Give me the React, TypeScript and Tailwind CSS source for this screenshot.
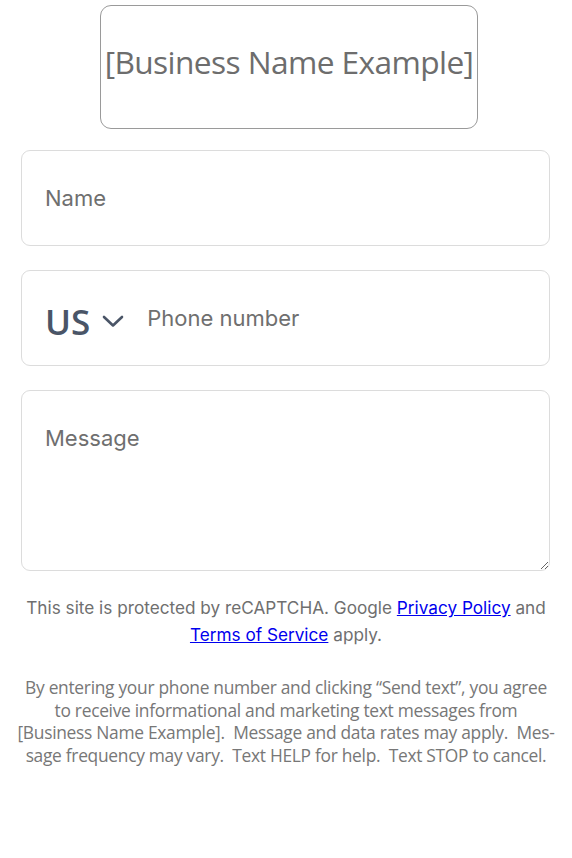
import React from "react";

const myriad = "font-['Open_Sans','Liberation_Sans',sans-serif]";
const inter = "font-['Inter','Liberation_Sans',sans-serif]";

function ChevronDown() {
  return (
    <svg width="24" height="14" viewBox="0 0 24 14" fill="none" className="text-[#4a5567]">
      <path d="M3 3l9 8.5L21 3" stroke="currentColor" strokeWidth="2.6" strokeLinecap="round" strokeLinejoin="round" />
    </svg>
  );
}

export default function App() {
  return (
    <div className="min-h-[858px] w-[572px] bg-white pt-[5px]">
      <div className="ml-[100px] flex h-[124px] w-[378px] items-center justify-center rounded-[11px] border border-[#9a9a9a] pb-[10px]">
        <span className={`${myriad} text-[31.7px] tracking-[-0.6px] text-[#6d6d6d]`}>[Business Name Example]</span>
      </div>

      <div className="ml-[21px] mt-[21px] flex w-[529px] flex-col gap-[24px]">
        <input
          placeholder="Name"
          className={`${inter} h-[96px] w-full rounded-[9px] border-[1.5px] border-[#dcdcdc] px-[23px] text-[22px] text-[#333] outline-none placeholder:text-[#6f6f6f]`}
        />

        <div className="flex h-[96px] w-full items-center rounded-[9px] border-[1.5px] border-[#dcdcdc] px-[23px]">
          <div className="flex items-center gap-[11px] pt-[6px]">
            <span className={`${myriad} text-[35px] font-semibold leading-none text-[#4a5567]`}>US</span>
            <ChevronDown />
          </div>
          <input
            placeholder="Phone number"
            className={`${inter} ml-[22px] flex-1 bg-transparent text-[22px] text-[#333] outline-none placeholder:text-[#6f6f6f]`}
          />
        </div>

        <textarea
          placeholder="Message"
          className={`${inter} h-[181px] w-full rounded-[9px] border-[1.5px] border-[#dcdcdc] px-[23px] pt-[33px] text-[22px] leading-[28px] text-[#333] outline-none placeholder:text-[#6f6f6f]`}
        />
      </div>

      <p className={`${inter} mt-[23px] text-center text-[17.2px] leading-[27px] text-[#6f6f6f]`}>
        This site is protected by reCAPTCHA. Google{" "}
        <a href="#" className="text-[#0000ee] underline">Privacy Policy</a> and
        <br />
        <a href="#" className="text-[#0000ee] underline">Terms of Service</a> apply.
      </p>

      <p className={`${myriad} mt-[28px] whitespace-nowrap text-center text-[17.4px] leading-[22.7px] tracking-[-0.3px] text-[#777]`}>
        By entering your phone number and clicking “Send text”, you agree
        <br />
        to receive informational and marketing text messages from
        <br />
        [Business Name Example].&nbsp; Message and data rates may apply.&nbsp; Mes-
        <br />
        sage frequency may vary.&nbsp; Text HELP for help.&nbsp; Text STOP to cancel.
      </p>
    </div>
  );
}
